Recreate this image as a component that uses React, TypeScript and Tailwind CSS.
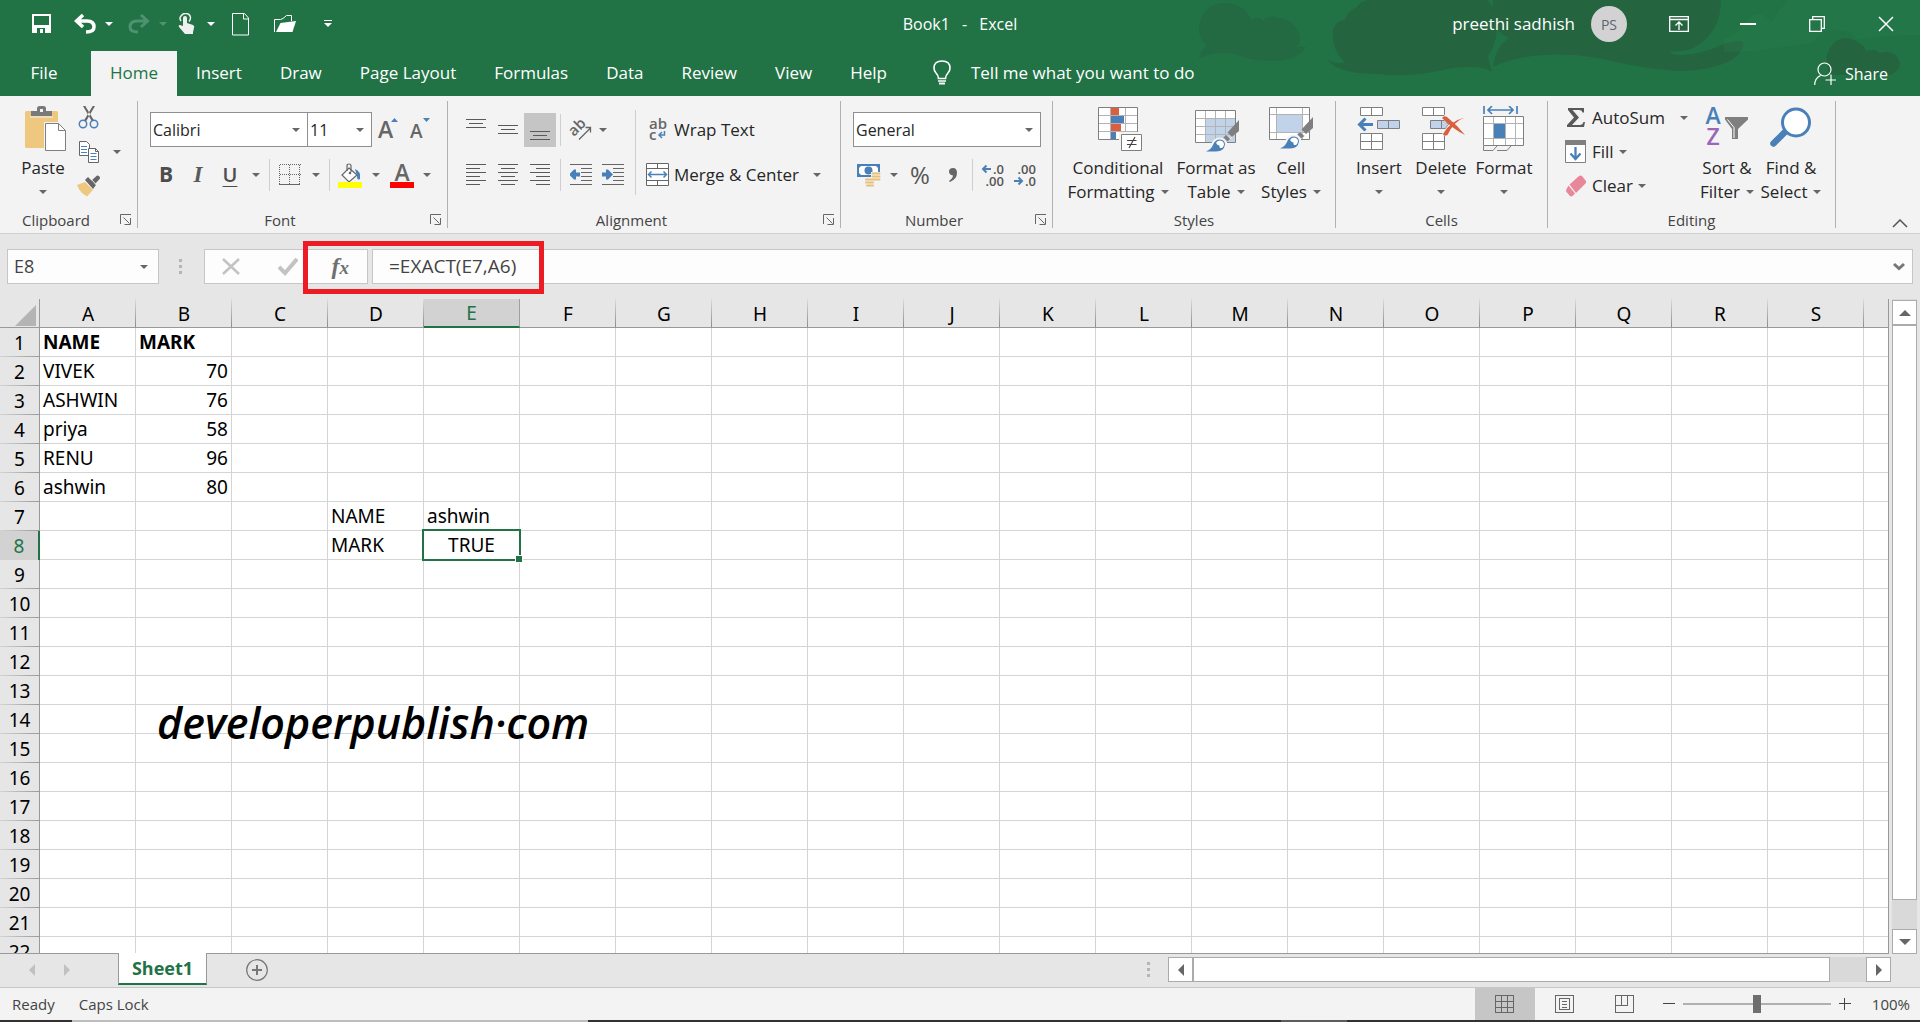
import type { ReactNode } from "react";
import clsx from "clsx";

const columns = "ABCDEFGHIJKLMNOPQRS".split("");
const rowCount = 22;
const activeCell = { col: "E", row: 8 };

type Cell = { text: string; bold?: boolean; align?: "right" | "center" };

const cells: Record<string, Cell> = {
  A1: { text: "NAME", bold: true },
  B1: { text: "MARK", bold: true },
  A2: { text: "VIVEK" },
  B2: { text: "70", align: "right" },
  A3: { text: "ASHWIN" },
  B3: { text: "76", align: "right" },
  A4: { text: "priya" },
  B4: { text: "58", align: "right" },
  A5: { text: "RENU" },
  B5: { text: "96", align: "right" },
  A6: { text: "ashwin" },
  B6: { text: "80", align: "right" },
  D7: { text: "NAME" },
  E7: { text: "ashwin" },
  D8: { text: "MARK" },
  E8: { text: "TRUE", align: "center" },
};

const tabs = ["Home", "Insert", "Draw", "Page Layout", "Formulas", "Data", "Review", "View", "Help"];

/* ---------- small shared pieces ---------- */

function Caret({ className = "text-[#666666]" }: { className?: string }) {
  return (
    <svg width="8" height="4" viewBox="0 0 8 4" className={clsx("shrink-0", className)} aria-hidden="true">
      <path d="M0 0h8L4 4z" fill="currentColor" />
    </svg>
  );
}

function IconButton({ label, className, children }: { label: string; className?: string; children: ReactNode }) {
  return (
    <button type="button" aria-label={label} className={clsx("flex h-[34px] shrink-0 items-center justify-center", className)}>
      {children}
    </button>
  );
}

function Divider({ className }: { className?: string }) {
  return <div className={clsx("h-8 w-px shrink-0 bg-[#cfcfcf]", className)} />;
}

function Group({ label, width, launcher, children }: { label: string; width: string; launcher?: boolean; children: ReactNode }) {
  return (
    <section aria-label={label} className={clsx("my-[5px] flex shrink-0 flex-col border-r border-[#b1b1b1]", width)}>
      <div className="h-[111px]">{children}</div>
      <div className="flex h-4 items-center text-[15px] leading-4 text-[#444444]">
        <span className="flex-1 text-center">{label}</span>
        {launcher && (
          <button type="button" aria-label={`${label} settings`} className="flex w-[25px] pl-2">
            <svg width="12" height="12" viewBox="0 0 12 12" fill="none" stroke="#666" aria-hidden="true">
              <path d="M.5 10V.5H11M3.5 3.5l6 6M10.500 4v6.500H4.500" />
            </svg>
          </button>
        )}
      </div>
    </section>
  );
}

function BigButton({ lines, width, icon, caret = "inline" }: { lines: string[]; width: string; icon: ReactNode; caret?: "inline" | "below" }) {
  return (
    <button type="button" className={clsx("flex shrink-0 flex-col items-center text-[17px] leading-6 text-[#262626]", width)}>
      <span className="flex h-[50px] items-start justify-center">{icon}</span>
      <span className="whitespace-nowrap">{lines[0]}</span>
      <span className="flex h-6 items-center gap-[6px] whitespace-nowrap">
        {caret === "inline" && lines[1]}
        <Caret />
      </span>
    </button>
  );
}

function Combo({ label, value, width }: { label: string; value: string; width: string }) {
  return (
    <div className={clsx("relative h-[35px] shrink-0", width)}>
      <select aria-label={label} className="h-full w-full appearance-none border border-[#8f8f8f] bg-white pl-[2px] text-[16px] text-[#262626]">
        <option>{value}</option>
      </select>
      <span className="pointer-events-none absolute inset-y-0 right-2 flex items-center">
        <Caret />
      </span>
    </div>
  );
}

/* ---------- icons ---------- */

const lineSets = {
  top: [[0, 20, 0], [3, 17, 4], [0, 20, 8]],
  middle: [[0, 20, 6], [3, 17, 10], [0, 20, 14]],
  bottom: [[0, 20, 12], [3, 17, 16], [0, 20, 20]],
  left: [[0, 20, 0], [0, 14, 4], [0, 20, 8], [0, 14, 12], [0, 20, 16], [0, 14, 20]],
  center: [[0, 20, 0], [3, 17, 4], [0, 20, 8], [3, 17, 12], [0, 20, 16], [3, 17, 20]],
  right: [[0, 20, 0], [6, 20, 4], [0, 20, 8], [6, 20, 12], [0, 20, 16], [6, 20, 20]],
};

function Lines({ kind }: { kind: keyof typeof lineSets }) {
  return (
    <svg width="20" height="22" viewBox="0 0 20 22" shapeRendering="crispEdges" stroke="#595959" aria-hidden="true">
      {lineSets[kind].map(([a, b, y]) => <path key={y} d={`M${a} ${y + 0.5}H${b}`} />)}
    </svg>
  );
}

function IndentIcon({ flip }: { flip?: boolean }) {
  return (
    <svg width="22" height="22" viewBox="0 0 22 22" aria-hidden="true">
      <path d="M0 .5h22M11 4.500h11M11 8.500h11M11 12.500h11M11 16.500h11M0 20.500h22" stroke="#666" />
      <path d={flip ? "M0 9h4V6h2l5 5-5 5H4v-3H0z" : "M10 9H6V6H4l-5 5 5 5h2v-3h4z"} fill="#4a80b8" transform="translate(0 -.5)" />
    </svg>
  );
}

const PasteIcon = () => (
  <svg width="48" height="46" viewBox="-6 0 48 46" aria-hidden="true">
    <rect x="0" y="5" width="33" height="37" rx="1.500" fill="#edc87e" />
    <path d="M6 10V5h6V2.500Q12 0 14.500 0h4Q21 0 21 2.500V5h6v5z" fill="#7a7a7a" />
    <rect x="15" y="3" width="3" height="3" fill="#f3f3f3" />
    <path d="M5 11h23" stroke="#f3f3f3" />
    <path d="M19 16h15.500l8 8V46H19z" fill="#f3f3f3" />
    <path d="M20.500 17.500h13l7 7v20h-20z" fill="#fff" stroke="#7f7f7f" />
    <path d="M33.500 17.500v7h7" fill="none" stroke="#7f7f7f" />
  </svg>
);

const CutIcon = () => (
  <svg width="22" height="24" viewBox="0 0 22 24" fill="none" aria-hidden="true">
    <path d="M5 0l2-.500 9 15-2 1zM17 0l-2-.500-9 15 2 1z" fill="#666" />
    <circle cx="5" cy="18" r="3.700" stroke="#4a80b8" strokeWidth="1.500" />
    <circle cx="16" cy="18" r="3.700" stroke="#4a80b8" strokeWidth="1.500" />
  </svg>
);

const CopyIcon = () => (
  <svg width="22" height="24" viewBox="0 0 22 24" fill="#fff" aria-hidden="true">
    <path d="M1.500 1.500h7l3 3v11h-10z" stroke="#666" />
    <path d="M3 6.500h6M3 9.500h6M3 12.500h6" stroke="#4a80b8" />
    <path d="M10.500 8.500h7l3 3v11h-10z" stroke="#666" />
    <path d="M17.500 8.500v3h3" stroke="#666" fill="none" />
    <path d="M12.500 13.500h6M12.500 16.500h6M12.500 19.500h6" stroke="#4a80b8" />
  </svg>
);

const PainterIcon = () => (
  <svg width="24" height="22" viewBox="0 0 24 22" aria-hidden="true">
    <path d="M0 10l8-3 8 8-6 6.500Q3 18 0 10z" fill="#edc87e" />
    <path d="M8 5l3-3 8 8-3 4z" fill="#666" />
    <path d="M14 6l6-5.500q3 0 3 3L18 9z" fill="#666" />
    <path d="M12.500 2.500l7.500 8" stroke="#f3f3f3" />
  </svg>
);

const SizeIcon = ({ up }: { up?: boolean }) => (
  <svg width="22" height="24" viewBox="0 0 22 24" className="overflow-visible" aria-hidden="true">
    <text x="1" y={21} fontFamily="Open Sans" fontWeight="600" fontSize={up ? 23 : 19} fill="#666">A</text>
    <path d={up ? "M14 5l3.500-4L21 5z" : "M14 1h7l-3.500 4z"} fill="#4a80b8" />
  </svg>
);

const BordersIcon = () => (
  <svg width="22" height="22" viewBox="0 0 22 22" shapeRendering="crispEdges" stroke="#666" fill="none" aria-hidden="true">
    <path d="M.5.5h21M.5 10.500h21M.5 1v20M10.500 1v20M20.500 1v20" strokeDasharray="1 1" />
    <path d="M0 20.500h21" />
  </svg>
);

const FillColorIcon = () => (
  <svg width="24" height="25" viewBox="0 0 24 25" aria-hidden="true">
    <path d="M11 5l8 7-8 7-7-7z" fill="#fff" stroke="#666" strokeWidth="1.200" />
    <path d="M9 8V3q0-2 2-2t2 2v6" fill="none" stroke="#666" strokeWidth="1.200" />
    <circle cx="12" cy="10" r="1.300" fill="#666" />
    <path d="M17 6q6 2 5 10-3 2-3-3z" fill="#4a80b8" />
    <path d="M0 19h24v6H0z" fill="#ffff00" />
  </svg>
);

const FontColorIcon = () => (
  <svg width="24" height="25" viewBox="0 0 24 25" className="overflow-visible" aria-hidden="true">
    <text x="12" y="18" textAnchor="middle" fontFamily="Open Sans" fontWeight="600" fontSize="23" fill="#666">A</text>
    <path d="M0 19h24v6H0z" fill="#ff0000" />
  </svg>
);

const OrientationIcon = () => (
  <svg width="24" height="24" viewBox="0 0 24 24" className="overflow-visible" aria-hidden="true">
    <text x="0" y="0" transform="translate(5 19) rotate(-45)" fontFamily="Open Sans" fontWeight="600" fontSize="15" fill="#666">ab</text>
    <path d="M10 21.500L21 10.500M16.500 9.500H21.500V14.500" fill="none" stroke="#666" strokeWidth="1.300" />
  </svg>
);

const WrapIcon = () => (
  <svg width="24" height="24" viewBox="0 0 24 24" className="overflow-visible" fontFamily="Open Sans" fontSize="15" fontWeight="600" fill="#666" aria-hidden="true">
    <text x="3" y="11">ab</text>
    <text x="3" y="22">c</text>
    <path d="M18.500 13v4H14M16 14l-3 3 3 3" fill="none" stroke="#4a80b8" strokeWidth="1.500" />
  </svg>
);

const MergeIcon = () => (
  <svg width="24" height="24" viewBox="0 0 24 24" fill="#fff" stroke="#666" aria-hidden="true">
    <path d="M.5.5h22v22H.5zM.5 5.500h22M.5 17.500h22M11.500.5v5M11.500 17.500v5" />
    <path d="M3 11.500h17M5.500 8.500l-3 3 3 3M17.500 8.500l3 3-3 3" fill="none" stroke="#4a80b8" strokeWidth="1.500" />
  </svg>
);

const CurrencyIcon = () => (
  <svg width="24" height="24" viewBox="0 0 24 24" aria-hidden="true">
    <path d="M0 1h23v13H0z" fill="#4a80b8" />
    <path d="M4 3h15l2 2v5l-2 2H4l-2-2V5z" fill="#fff" />
    <circle cx="11.500" cy="7.500" r="4" fill="#4a80b8" />
    <path d="M14 9h9v10h-6v4H8v-8h6z" fill="#f3f3f3" />
    <path d="M15.500 10.500h7M15.500 13.500h7M16.500 16.500h6M9 16.500h7M9 19.500h7M10 22.500h6" stroke="#e9bf78" strokeWidth="2" strokeLinecap="round" />
  </svg>
);

const DecimalIcon = ({ less }: { less?: boolean }) => (
  <svg width="24" height="26" viewBox="0 0 24 26" className="overflow-visible" fontFamily="Open Sans" fontSize="13" fontWeight="600" fill="#555" textAnchor="end" aria-hidden="true">
    <text x="23" y="12">{less ? ".00" : ".0"}</text>
    <text x="23" y="24">{less ? ".0" : ".00"}</text>
    {less ? (
      <path d="M1 19h8M5.500 15.500L9 19l-3.500 3.500" fill="none" stroke="#4a80b8" strokeWidth="2" />
    ) : (
      <path d="M10 7H2M5.500 3.500L2 7l3.500 3.500" fill="none" stroke="#4a80b8" strokeWidth="2" />
    )}
  </svg>
);

const ConditionalIcon = () => (
  <svg width="48" height="46" viewBox="-4 0 48 46" aria-hidden="true">
    <path d="M.5 1.500h39v32H.5z" fill="#fff" />
    <path d="M.5 9.500h39M.5 17.500h39M.5 25.500h39M12.500 1v32M27.500 1v32" stroke="#b3b3b3" />
    <path d="M.5 1.500h39v32H.5z" fill="none" stroke="#7f7f7f" />
    <path d="M13 2h8v7h-8zM13 18h10v7H13z" fill="#d95f3f" />
    <path d="M13 10h13v7H13zM13 26h5v7h-5z" fill="#4a80b8" />
    <path d="M21 26h23v19H21z" fill="#f3f3f3" />
    <path d="M23.500 28.500h20v16h-20z" fill="#fff" stroke="#7f7f7f" />
    <path d="M29 34.500h9.500M29 38.500h9.500M37 31l-6 11" stroke="#444" strokeWidth="1.200" />
  </svg>
);

// paint brush with its tip at the lower left, shared by the two style icons
const Brush = () => (
  <g>
    <path d="M44 9v12L31 34" fill="none" stroke="#f3f3f3" />
    <path d="M44 11v11l-7 6-4.500-4.500z" fill="#7f7f7f" />
    <path d="M31 25.500l4.500 4.500-3 3-4.500-4.500z" fill="#7f7f7f" stroke="#f3f3f3" strokeWidth=".5" />
    <path d="M10 43q5-2 7-7Q19 29.500 25 29.500q6 .5 5.500 6Q30 43 21 43z" fill="#f3f3f3" stroke="#f3f3f3" strokeWidth="2" />
    <path d="M11 42.500q5-2 7-6.500Q20 30.500 25 30.500q5 .5 5 5Q29 42.500 21 42.500z" fill="#4a80b8" />
    <path d="M21 34q1-2.500 4-2.500 4 .5 4 4-.500 2.500-2 3.500-3 .500-2.500-2.500-2 0-3.500-2.500z" fill="#fff" />
  </g>
);

const FormatTableIcon = () => (
  <svg width="46" height="48" viewBox="-2 0 46 48" aria-hidden="true">
    <path d="M.5 4.500h40v32H.5z" fill="#fff" />
    <path d="M11 13h29v23H11z" fill="#c0d3e9" />
    <path d="M.5 12.500h40M.5 20.500h40M.5 28.500h40M10.500 5v31M20.500 5v31M30.500 5v31" stroke="#b3b3b3" />
    <path d="M.5 4.500h40v32H.5z" fill="none" stroke="#7f7f7f" />
    <g transform="translate(0 3)"><Brush /></g>
  </svg>
);

const CellStylesIcon = () => (
  <svg width="44" height="46" viewBox="0 0 44 46" aria-hidden="true">
    <path d="M.5 1.500h40v32H.5z" fill="#fff" />
    <path d="M8 9h25v18H8z" fill="#c0d3e9" />
    <path d="M.5 8.500h40M.5 26.500h40M7.500 1v32M33.500 1v32" stroke="#b3b3b3" />
    <path d="M.5 1.500h40v32H.5z" fill="none" stroke="#7f7f7f" />
    <Brush />
  </svg>
);

const InsertIcon = () => (
  <svg width="44" height="46" viewBox="0 0 44 46" fill="#fff" stroke="#7f7f7f" aria-hidden="true">
    <path d="M3.500 1.500h22v8h-22zM14.500 1.500v8M3.500 27.500h22v16h-22zM14.500 27.500v16M3.500 35.500h22" />
    <path d="M20.500 14.500h22v8h-22zM31.500 14.500v8" fill="#c0d3e9" />
    <path d="M16 18.500H2M8.500 12.500l-6 6 6 6" fill="none" stroke="#4a80b8" strokeWidth="3" />
  </svg>
);

const DeleteIcon = () => (
  <svg width="49" height="46" viewBox="-5 0 49 46" fill="#fff" stroke="#7f7f7f" aria-hidden="true">
    <path d="M.5 1.500h22v8H.5zM11.500 1.500v8M.5 27.500h22v16H.5zM11.500 27.500v16M.5 35.500h22" />
    <path d="M8.500 14.500h15l3 4-3 4h-15zM19.500 14.500v8" fill="#c0d3e9" />
    <path d="M22 10q9 5 20 19M43 12Q31 16 23 30" fill="none" stroke="#f3f3f3" strokeWidth="7" />
    <path d="M20 12q2-3 5-1 10 8 18 18Q31 23 20 12z" fill="#d95f3f" stroke="none" />
    <path d="M43 11.500Q32 15 25.500 29q-4 2-4.500-1Q28 15 43 11.500z" fill="#d95f3f" stroke="none" />
  </svg>
);

const FormatIcon = () => (
  <svg width="42" height="46" viewBox="0 0 42 46" aria-hidden="true">
    <path d="M1 0v8M34 0v8M6 4h23M9 0L5 4l4 4M26 0l4 4-4 4" fill="none" stroke="#4a80b8" strokeWidth="1.700" />
    <path d="M.5 10.500h40v29H.5z" fill="#fff" />
    <path d="M.5 17.500h40M.5 32.500h40M10.500 10v29M22.500 10v29M32.500 10v29" stroke="#b3b3b3" />
    <path d="M.5 10.500h40v29H.5z" fill="none" stroke="#7f7f7f" />
    <path d="M11 18h11v14H11z" fill="#4a80b8" />
    <path d="M.5 40v4.500H10l4-4.500M14 44.500h10l4-4.500" fill="none" stroke="#7f7f7f" />
  </svg>
);

const SigmaIcon = () => (
  <svg width="22" height="24" viewBox="0 0 22 24" aria-hidden="true">
    <path d="M3 2h16v4.500h-1.500Q17 4 14.500 4H7.500l6.500 7.500L7 19h8q2.500 0 3.500-3H20l-1 5H2v-2l7-7.500L3 4z" fill="#595959" />
  </svg>
);

const FillIcon = () => (
  <svg width="22" height="24" viewBox="0 0 22 24" aria-hidden="true">
    <path d="M.5.5h20v22H.5z" fill="#fff" stroke="#7f7f7f" />
    <path d="M0 0h21v5H0z" fill="#7f7f7f" />
    <path d="M10.500 7v12M5.500 13.500l5 5.500 5-5.500" fill="none" stroke="#4a80b8" strokeWidth="2.300" />
  </svg>
);

const EraserIcon = () => (
  <svg width="22" height="22" viewBox="0 0 22 22" fill="#e8879a" aria-hidden="true">
    <path d="M14 1q1.500-1 3 0l4 5q.5 1.500-.5 2.500L11 18 4.500 9.500z" />
    <path d="M3.500 10.500l6.500 8-2.500 2.500q-1.500 1-3-.5L1.500 17q-1-1.500 0-3z" />
  </svg>
);

const SortIcon = () => (
  <svg width="44" height="46" viewBox="0 0 44 46" className="overflow-visible" aria-hidden="true">
    <text x="8" y="18" textAnchor="middle" fontFamily="Open Sans" fontWeight="600" fontSize="23" fill="#4a80b8">A</text>
    <text x="8" y="39" textAnchor="middle" fontFamily="Open Sans" fontWeight="600" fontSize="23" fill="#9a66b8">Z</text>
    <path d="M20 11h23v2.500L33 23v10h-6V23L20 13.500z" fill="#7f7f7f" />
    <path d="M22.500 13.500l6.500 8V32" fill="none" stroke="#fff" />
  </svg>
);

const FindIcon = () => (
  <svg width="42" height="46" viewBox="0 0 42 46" aria-hidden="true">
    <path d="M16 25L3.500 37.500" stroke="#4a80b8" strokeWidth="6.500" strokeLinecap="round" />
    <circle cx="26" cy="16.500" r="13.500" fill="#fff" stroke="#4a80b8" strokeWidth="3" />
  </svg>
);

/* ---------- title bar and tabs ---------- */

function HeaderArt() {
  return (
    <svg width="740" height="96" viewBox="0 0 740 96" fill="#24653f" className="pointer-events-none absolute top-0 right-0" aria-hidden="true">
      <path d="M19 58Q20 50 27 46 16 37 20 22 26 3 44 3q20 0 27 17 8-5 12 1 6-7 17-3 18 4 20 20 0 6-4 9 6-1 10 0-8 14-36 14-20 0-35-7Q38 51 19 58z" fill="#236a43" />
      <path d="M147 59q8 6 18 3Q151 50 153 30q3-10 12-10 3-10 12-13Q180 2 187 0h120q12 10 10 30-2 18-9 26l4 16q-12-8-44-3-40 9-70 5Q157 74 147 59z" />
      <path d="M313 67q2-20 16-29-16-8-16-20V0h228q0 30-23 45-6 5-16 6-16 1-14 0 6 6 24 3 18-3 31-10 18-5 20-2 2 8-10 17-20 12-55 12-35-2-80-13Q355 48 313 67z" />
      <path d="M650 75q-8-20 3-31 10-10 23-3 8 4 10 10 8-3 14 2 16-4 20 10 0 8-10 12z" />
      <path d="M608 0q-12 14-16 22-14-16-26 0-8 14-22 16v14q40 0 90-10 4-10 16-12 22-2 26 10 30-5 64-5V0z" fill="#2b7f50" opacity=".25" />
    </svg>
  );
}

function TitleBar() {
  return (
    <div className="relative flex h-[51px] items-center pb-[3px] text-white">
      <div className="flex flex-1 items-center">
        <button type="button" aria-label="Save" className="mr-[11px] ml-[26px] flex w-8 justify-center">
          <svg width="20" height="20" viewBox="0 0 20 20" aria-hidden="true">
            <path d="M1 1h17v17H1z" fill="none" stroke="#fff" strokeWidth="2" />
            <path d="M1 11h17v8H1z" fill="#fff" />
            <path d="M5 14h8v5H5z" fill="#217346" /><path d="M8 15h3v4H8z" fill="#fff" />
          </svg>
        </button>
        <button type="button" aria-label="Undo" className="flex w-8 justify-center">
          <svg width="22" height="20" viewBox="0 0 22 20" fill="none" stroke="#fff" strokeWidth="3.500" aria-hidden="true">
            <path d="M2 7h11q7 0 7 6 0 5-8 5M9 1L2.500 7 9 13" />
          </svg>
        </button>
        <button type="button" aria-label="Undo list" className="flex w-4 justify-center"><Caret className="text-white" /></button>
        <button type="button" aria-label="Redo" className="ml-[6px] flex w-8 justify-center">
          <svg width="22" height="20" viewBox="0 0 22 20" fill="none" stroke="#4f9270" strokeWidth="3" aria-hidden="true">
            <path d="M20 7H9q-7 0-7 6 0 5 8 5M13 1l6.500 6L13 13" />
          </svg>
        </button>
        <button type="button" aria-label="Redo list" className="flex w-4 justify-center"><Caret className="text-[#4f9270]" /></button>
        <button type="button" aria-label="Touch mode" className="flex w-8 justify-center">
          <svg width="18" height="22" viewBox="0 0 18 22" fill="#f0f0f0" aria-hidden="true">
            <path d="M5 9V5q0-2 2-2t2 2v5l6 2q2 1 1 3l-1 4v2H7L1 14q-1-2 1-2l3 1z" />
            <path d="M3 8Q1 5 3 3q2-3 5-2.500 4 .5 4.500 4Q12.500 7 11 8.500" fill="none" stroke="#f0f0f0" strokeWidth="1.500" />
          </svg>
        </button>
        <button type="button" aria-label="Touch mode list" className="flex w-4 justify-center"><Caret className="text-white" /></button>
        <button type="button" aria-label="New" className="ml-[6px] flex w-8 justify-center">
          <svg width="18" height="23" viewBox="0 0 18 23" fill="none" stroke="#fff" aria-hidden="true">
            <path d="M.5.5h12l4 4.500v17H.5zM11.500.5V6H17" />
          </svg>
        </button>
        <button type="button" aria-label="Open" className="ml-3 flex w-8 justify-center">
          <svg width="22" height="18" viewBox="0 0 22 18" aria-hidden="true">
            <path d="M.5 17V4.500h6L9 3.500 12.500.5h5V6" fill="none" stroke="#fff" />
            <path d="M2 17L6.500 8 22 6l-3.500 11z" fill="#fff" />
          </svg>
        </button>
        <button type="button" aria-label="Customize toolbar" className="ml-[11px] flex w-8 justify-center">
          <svg width="8" height="8" viewBox="0 0 8 8" fill="#fff" aria-hidden="true"><path d="M0 0h8v1H0zM0 3h8L4 7z" /></svg>
        </button>
      </div>
      <h1 className="text-[16px]">Book1 <span className="mx-2">-</span> Excel</h1>
      <div className="flex flex-1 items-center justify-end">
        <span className="text-[17px]">preethi sadhish</span>
        <span className="mr-[17px] ml-4 flex size-9 items-center justify-center rounded-full bg-[#d2d2d2] text-[14px] text-[#5c6570]">PS</span>
        <button type="button" aria-label="Ribbon display options" className="flex w-[69px] justify-center">
          <svg width="20" height="16" viewBox="0 0 20 16" fill="none" stroke="#fff" strokeWidth="1.300" aria-hidden="true">
            <path d="M.7.700h18.600v14.600H.7zM.7 3.500h18.600M10 14V6M6.500 9.500L10 6l3.500 3.500" />
          </svg>
        </button>
        <button type="button" aria-label="Minimize" className="flex w-[69px] justify-center">
          <svg width="16" height="16" viewBox="0 0 16 16" aria-hidden="true"><path d="M0 7h16v2H0z" fill="#fff" /></svg>
        </button>
        <button type="button" aria-label="Restore" className="flex w-[69px] justify-center">
          <svg width="16" height="16" viewBox="0 0 16 16" fill="none" stroke="#fff" strokeWidth="1.300" aria-hidden="true">
            <path d="M.7 3.700h11.600v11.600H.7zM3.700 3V.7h11.600v11.600H13" />
          </svg>
        </button>
        <button type="button" aria-label="Close" className="flex w-[69px] justify-center">
          <svg width="16" height="16" viewBox="0 0 16 16" stroke="#fff" strokeWidth="1.500" aria-hidden="true"><path d="M1 1l14 14M15 1L1 15" /></svg>
        </button>
      </div>
    </div>
  );
}

function TabRow() {
  return (
    <nav className="relative flex h-[45px] items-center text-[17px] text-white" aria-label="Ribbon tabs">
      <button type="button" className="h-full w-[91px] pr-[3px] pb-[2px]">File</button>
      {tabs.map(tab => (
        <button key={tab} type="button" className={clsx("h-full px-[19px] pb-[2px] whitespace-nowrap", tab === "Home" && "bg-[#f3f3f3] text-[#217346]")}>
          {tab}
        </button>
      ))}
      <button type="button" className="ml-[27px] flex items-center gap-5 pb-[2px]">
        <svg width="18" height="25" viewBox="0 0 18 25" fill="none" stroke="#fff" strokeWidth="1.600" aria-hidden="true">
          <path d="M5.500 18.500q0-3-2.500-5.500-2-2-2-5 0-7 8-7t8 7q0 3-2 5-2.500 2.500-2.500 5.500zM5 21h8" />
          <path d="M6 23.500h6" strokeWidth="2" />
        </svg>
        Tell me what you want to do
      </button>
      <button type="button" className="ml-auto flex items-center gap-2 pr-8 text-[16px]">
        <svg width="23" height="24" viewBox="0 0 23 24" fill="none" stroke="#fff" strokeWidth="1.200" aria-hidden="true">
          <circle cx="10.500" cy="7.500" r="6.500" /><path d="M.7 23q0-7 6-9.500M17 12.500V23M11.500 18H22" />
        </svg>
        Share
      </button>
    </nav>
  );
}

/* ---------- ribbon ---------- */

function Ribbon() {
  return (
    <div className="flex h-[138px] border-b border-[#d0d0d0] bg-[#f3f3f3]">
      <Group label="Clipboard" width="w-[138px]" launcher>
        <div className="flex pl-[18px]">
          <div className="pt-[5px]">
            <BigButton lines={["Paste"]} caret="below" width="w-[50px]" icon={<PasteIcon />} />
          </div>
          <div className="flex flex-col pl-[9px]">
            <IconButton label="Cut" className="w-6"><CutIcon /></IconButton>
            <div className="flex">
              <IconButton label="Copy" className="w-6"><CopyIcon /></IconButton>
              <IconButton label="Copy options" className="w-6 pl-2"><Caret /></IconButton>
            </div>
            <IconButton label="Format Painter" className="w-6"><PainterIcon /></IconButton>
          </div>
        </div>
      </Group>

      <Group label="Font" width="w-[310px]" launcher>
        <div className="flex pt-[11px] pl-3">
          <Combo label="Font name" value="Calibri" width="w-[158px]" />
          <Combo label="Font size" value="11" width="-ml-px w-[65px]" />
          <IconButton label="Increase font size" className="w-8"><SizeIcon up /></IconButton>
          <IconButton label="Decrease font size" className="w-8"><SizeIcon /></IconButton>
        </div>
        <div className="flex items-center pt-[11px] pl-3">
          <IconButton label="Bold" className="w-8 text-[21px] font-bold text-[#4d4d4d]">B</IconButton>
          <IconButton label="Italic" className="w-8 font-['Liberation_Serif',serif] text-[23px] font-bold text-[#5a5a5a] italic">I</IconButton>
          <IconButton label="Underline" className="w-8 text-[20px] font-semibold text-[#4d4d4d] underline decoration-1 underline-offset-4">U</IconButton>
          <IconButton label="Underline options" className="w-5"><Caret /></IconButton>
          <Divider className="mr-1 ml-[3px]" />
          <IconButton label="Borders" className="w-8"><BordersIcon /></IconButton>
          <IconButton label="Border options" className="w-5"><Caret /></IconButton>
          <Divider className="mx-[3px]" />
          <IconButton label="Fill color" className="w-[34px]"><FillColorIcon /></IconButton>
          <IconButton label="Fill color options" className="w-[18px]"><Caret /></IconButton>
          <IconButton label="Font color" className="w-[34px]"><FontColorIcon /></IconButton>
          <IconButton label="Font color options" className="w-4"><Caret /></IconButton>
        </div>
      </Group>

      <Group label="Alignment" width="w-[393px]" launcher>
        <div className="flex">
          <div className="pl-3">
            <div className="flex items-center pt-3">
              <IconButton label="Top align" className="w-8"><Lines kind="top" /></IconButton>
              <IconButton label="Middle align" className="w-8"><Lines kind="middle" /></IconButton>
              <IconButton label="Bottom align" className="w-8 bg-[#c5c5c5]"><Lines kind="bottom" /></IconButton>
              <Divider className="mx-1" />
              <IconButton label="Orientation" className="w-8"><OrientationIcon /></IconButton>
              <IconButton label="Orientation options" className="w-3"><Caret /></IconButton>
            </div>
            <div className="flex items-center pt-[11px]">
              <IconButton label="Align left" className="w-8"><Lines kind="left" /></IconButton>
              <IconButton label="Center" className="w-8"><Lines kind="center" /></IconButton>
              <IconButton label="Align right" className="w-8"><Lines kind="right" /></IconButton>
              <Divider className="mx-1" />
              <IconButton label="Decrease indent" className="w-8"><IndentIcon /></IconButton>
              <IconButton label="Increase indent" className="w-8"><IndentIcon flip /></IconButton>
            </div>
          </div>
          <div className="mt-[9px] ml-[6px] h-[85px] w-px bg-[#cfcfcf]" />
          <div className="pl-[10px] text-[17px] text-[#262626]">
            <button type="button" className="mt-3 flex h-[34px] items-center gap-1"><WrapIcon />Wrap Text</button>
            <button type="button" className="mt-[11px] flex h-[34px] items-center gap-1 whitespace-nowrap">
              <MergeIcon />Merge &amp; Center<span className="flex pl-[10px]"><Caret /></span>
            </button>
          </div>
        </div>
      </Group>

      <Group label="Number" width="w-[212px]" launcher>
        <div className="flex pt-[11px] pl-3">
          <Combo label="Number format" value="General" width="w-[188px]" />
        </div>
        <div className="flex items-center pt-[11px] pl-3">
          <IconButton label="Accounting format" className="w-8"><CurrencyIcon /></IconButton>
          <IconButton label="Accounting options" className="w-[18px]"><Caret /></IconButton>
          <IconButton label="Percent style" className="w-[34px] text-[24px] text-[#555555]">%</IconButton>
          <IconButton label="Comma style" className="w-8">
            <svg width="10" height="16" viewBox="0 0 10 16" fill="#666" aria-hidden="true">
              <path d="M5 1q4 0 4 5 0 6-7 9l-1-1q4-3 4-5.500Q1 8 1 4.500 1 1 5 1z" />
            </svg>
          </IconButton>
          <Divider className="mr-1 ml-[3px]" />
          <IconButton label="Increase decimal" className="w-8"><DecimalIcon /></IconButton>
          <IconButton label="Decrease decimal" className="w-8"><DecimalIcon less /></IconButton>
        </div>
      </Group>

      <Group label="Styles" width="w-[283px]">
        <div className="flex pt-[5px] pl-3">
          <BigButton lines={["Conditional", "Formatting"]} width="w-[106px]" icon={<ConditionalIcon />} />
          <BigButton lines={["Format as", "Table"]} width="w-[90px]" icon={<FormatTableIcon />} />
          <BigButton lines={["Cell", "Styles"]} width="w-[60px]" icon={<CellStylesIcon />} />
        </div>
      </Group>

      <Group label="Cells" width="w-[212px]">
        <div className="flex pt-[5px] pl-3">
          <BigButton lines={["Insert"]} caret="below" width="w-[62px]" icon={<InsertIcon />} />
          <BigButton lines={["Delete"]} caret="below" width="w-[62px]" icon={<DeleteIcon />} />
          <BigButton lines={["Format"]} caret="below" width="w-[64px]" icon={<FormatIcon />} />
        </div>
      </Group>

      <Group label="Editing" width="w-[288px]">
        <div className="flex">
          <div className="w-[147px] pl-[17px] text-[17px] text-[#262626]">
            <button type="button" className="flex h-[34px] items-center gap-[5px]"><SigmaIcon />AutoSum<span className="flex pl-[10px]"><Caret /></span></button>
            <button type="button" className="flex h-[34px] items-center gap-[5px]"><FillIcon />Fill<Caret /></button>
            <button type="button" className="flex h-[34px] items-center gap-[5px]"><EraserIcon />Clear<Caret /></button>
          </div>
          <div className="flex pt-[5px]">
            <BigButton lines={["Sort &", "Filter"]} width="w-[64px]" icon={<SortIcon />} />
            <BigButton lines={["Find &", "Select"]} width="w-[64px]" icon={<FindIcon />} />
          </div>
        </div>
      </Group>

      <button type="button" aria-label="Collapse ribbon" className="mt-auto mr-3 mb-[5px] ml-auto">
        <svg width="16" height="9" viewBox="0 0 16 9" fill="none" stroke="#555" strokeWidth="1.500" aria-hidden="true"><path d="M1 8l7-7 7 7" /></svg>
      </button>
    </div>
  );
}

/* ---------- formula bar ---------- */

function FormulaBar() {
  return (
    <div className="relative flex h-[65px] shrink-0 items-start pt-[15px] pr-[7px] pl-[7px] text-[17px] text-[#444444]">
      <div className="flex h-[35px] w-[152px] items-center border border-[#c6c6c6] bg-[#fdfdfd] pr-[10px]">
        <input aria-label="Name box" defaultValue="E8" className="w-0 flex-1 bg-transparent pl-[6px] text-[18px] outline-none" />
        <Caret />
      </div>
      <div className="mx-[20px] flex h-[35px] w-[3px] flex-col justify-center gap-[3px]">
        <i className="h-[3px] bg-[#b5b5b5]" /><i className="h-[3px] bg-[#b5b5b5]" /><i className="h-[3px] bg-[#b5b5b5]" />
      </div>
      <div className="ml-[2px] flex h-[35px] w-[164px] items-center justify-between border border-[#c6c6c6] bg-[#fdfdfd] pr-[18px] pl-[17px]">
        <button type="button" aria-label="Cancel">
          <svg width="18" height="17" viewBox="0 0 18 17" stroke="#c3c3c3" strokeWidth="2.500" aria-hidden="true"><path d="M1 1l16 15M17 1L1 16" /></svg>
        </button>
        <button type="button" aria-label="Enter" className="pl-4">
          <svg width="20" height="18" viewBox="0 0 20 18" fill="none" stroke="#c3c3c3" strokeWidth="4" aria-hidden="true"><path d="M1 9l6 6L19 1" /></svg>
        </button>
        <button type="button" aria-label="Insert function" className="pl-3 font-['Liberation_Serif',serif] text-[24px] leading-6 font-bold text-[#707070] italic">
          f<span className="text-[19px]">x</span>
        </button>
      </div>
      <div className="ml-1 flex h-[35px] flex-1 items-center border border-[#c6c6c6] bg-[#fdfdfd] pr-[7px]">
        <input aria-label="Formula" defaultValue="=EXACT(E7,A6)" className="w-0 flex-1 bg-transparent pl-4 text-[19px] outline-none" />
        <button type="button" aria-label="Expand formula bar">
          <svg width="12" height="9" viewBox="0 0 12 9" fill="none" stroke="#777" strokeWidth="3" aria-hidden="true"><path d="M1 2l5 4.500L11 2" /></svg>
        </button>
      </div>
      <div className="pointer-events-none absolute top-[7px] left-[303px] h-[53px] w-[241px] border-[5px] border-[#ed1c24]" />
    </div>
  );
}

/* ---------- sheet ---------- */

function Sheet() {
  return (
    <div className="relative min-h-0 flex-1 overflow-hidden border-r border-b border-[#999999]">
      <table className="w-[1960px] table-fixed border-separate border-spacing-0 font-['Noto_Sans','Open_Sans',sans-serif] text-[19px] leading-[28px] text-black">
        <colgroup>
          <col className="w-10" />
          {columns.map(c => <col key={c} className="w-24" />)}
          <col className="w-24" />
        </colgroup>
        <thead>
          <tr className="h-[29px]">
            <th className="border-r border-b border-[#9a9a9a] bg-[#e6e6e6] p-0" aria-label="Select all">
              <svg width="21" height="21" viewBox="0 0 21 21" className="mt-1 ml-[15px]" aria-hidden="true"><path d="M21 0v21H0z" fill="#b4b4b4" /></svg>
            </th>
            {columns.map(c => (
              <th
                key={c}
                scope="col"
                className={clsx(
                  "bg-[length:1px_100%] bg-right bg-no-repeat px-0 pt-[2px] pb-0 font-normal",
                  c === activeCell.col
                    ? "border-r border-b-2 border-r-[#a0a0a0] border-b-[#217346] bg-[#d2d2d2] text-[#217346] leading-[25px]"
                    : "border-b border-[#999999] bg-[#e6e6e6] bg-[linear-gradient(#dadada,#8c8c8c)] leading-[26px]"
                )}
              >
                {c}
              </th>
            ))}
            <th className="border-b border-[#999999] bg-[#e6e6e6] p-0" />
          </tr>
        </thead>
        <tbody>
          {Array.from({ length: rowCount }, (_, i) => i + 1).map(row => (
            <tr key={row} className="h-[29px]">
              <th
                scope="row"
                className={clsx(
                  "bg-[length:100%_1px] bg-bottom bg-no-repeat p-0 font-normal",
                  row === activeCell.row
                    ? "border-r-2 border-[#217346] bg-[#d2d2d2] text-[#217346]"
                    : "border-r border-[#999999] bg-[#e6e6e6] bg-[linear-gradient(90deg,#d4d4d4,#9a9a9a)]"
                )}
              >
                {row}
              </th>
              {columns.map(c => {
                const cell = cells[c + row];
                const active = c === activeCell.col && row === activeCell.row;
                return (
                  <td
                    key={c}
                    className={clsx(
                      "border-r border-b border-[#d4d4d4] bg-white px-[3px] py-0",
                      cell?.bold && "font-bold",
                      cell?.align === "right" && "text-right",
                      cell?.align === "center" && "text-center",
                      active && "relative"
                    )}
                  >
                    {cell?.text}
                    {active && (
                      <div className="absolute -top-[2px] -right-[2px] -bottom-[2px] -left-[2px] border-2 border-[#217346]">
                        <i className="absolute -right-[3px] -bottom-[3px] size-[6px] bg-[#217346] ring-1 ring-white" />
                      </div>
                    )}
                  </td>
                );
              })}
              <td className="border-b border-[#d4d4d4] bg-white" />
            </tr>
          ))}
        </tbody>
      </table>
      <p className="absolute top-[394px] left-[157px] font-['Open_Sans',sans-serif] text-[43px] leading-[60px] font-semibold text-black italic">
        developerpublish·com
      </p>
    </div>
  );
}

function Arrow({ dir, className = "text-[#666666]" }: { dir: "up" | "down" | "left" | "right"; className?: string }) {
  const d = { up: "M0 9l6-6 6 6z", down: "M0 3h12L6 9z", left: "M9 0v12L3 6z", right: "M3 0v12l6-6z" }[dir];
  return <svg width="12" height="12" viewBox="0 0 12 12" className={className} aria-hidden="true"><path d={d} fill="currentColor" /></svg>;
}

function VerticalScroll() {
  const button = "flex h-[25px] items-center justify-center border border-[#ababab] bg-white";
  return (
    <div className="mr-[3px] ml-[3px] flex w-[25px] flex-col bg-[#d9d9d9] pt-px">
      <button type="button" aria-label="Scroll up" className={button}><Arrow dir="up" /></button>
      <div className="flex-1 border border-[#ababab] bg-white" />
      <div className="h-[29px]" />
      <button type="button" aria-label="Scroll down" className={button}><Arrow dir="down" /></button>
    </div>
  );
}

function SheetTabs() {
  const button = "flex w-[25px] items-center justify-center border border-[#ababab] bg-white";
  return (
    <div className="flex h-[34px] shrink-0 items-start border-b border-[#c6c6c6]">
      <button type="button" aria-label="Previous sheet" className="ml-[26px] flex h-8 items-center"><Arrow dir="left" className="text-[#c0c0c0]" /></button>
      <button type="button" aria-label="Next sheet" className="ml-[23px] flex h-8 items-center"><Arrow dir="right" className="text-[#c0c0c0]" /></button>
      <button type="button" className="relative -mt-px ml-[45px] h-[32px] w-[89px] border-x border-b-2 border-x-[#999999] border-b-[#217346] bg-white text-[18px] leading-[28px] font-bold text-[#217346]">
        Sheet1
      </button>
      <button type="button" aria-label="New sheet" className="mt-[5px] ml-[39px]">
        <svg width="22" height="22" viewBox="0 0 22 22" fill="none" stroke="#777" aria-hidden="true">
          <circle cx="11" cy="11" r="10.300" strokeWidth="1.200" /><path d="M11 6v10M6 11h10" strokeWidth="2" />
        </svg>
      </button>
      <div className="mt-2 mr-[18px] ml-auto flex w-[3px] flex-col gap-[3px]">
        <i className="h-[3px] bg-[#b5b5b5]" /><i className="h-[3px] bg-[#b5b5b5]" /><i className="h-[3px] bg-[#b5b5b5]" />
      </div>
      <div className="mt-[3px] mr-[29px] flex h-[25px] w-[723px] bg-[#d9d9d9]">
        <button type="button" aria-label="Scroll left" className={button}><Arrow dir="left" /></button>
        <div className="flex-1 border border-[#ababab] bg-white" />
        <div className="w-9" />
        <button type="button" aria-label="Scroll right" className={button}><Arrow dir="right" /></button>
      </div>
    </div>
  );
}

function StatusBar() {
  return (
    <footer className="shrink-0">
      <div className="flex h-8 items-center bg-[#f3f3f3] pr-[10px] pl-3 text-[15px] text-[#444444]">
        <span>Ready</span>
        <span className="ml-6">Caps Lock</span>
        <button type="button" aria-label="Normal view" className="ml-auto flex h-8 w-[60px] items-center justify-center bg-[#c6c6c6]">
          <svg width="20" height="18" viewBox="0 0 20 18" fill="none" stroke="#666" shapeRendering="crispEdges" aria-hidden="true">
            <path d="M.5.5h18v17H.5zM.5 6.500h18M.5 12.500h18M6.500.5v17M12.500.5v17" />
          </svg>
        </button>
        <button type="button" aria-label="Page layout view" className="flex w-[60px] justify-center">
          <svg width="20" height="18" viewBox="0 0 20 18" fill="none" stroke="#666" shapeRendering="crispEdges" aria-hidden="true">
            <path d="M.5.5h18v17H.5zM4.500 3.500h10v11h-10zM7 6.500h5M7 9.500h5M7 12.500h5" />
          </svg>
        </button>
        <button type="button" aria-label="Page break view" className="flex w-[60px] justify-center">
          <svg width="20" height="18" viewBox="0 0 20 18" fill="none" stroke="#666" shapeRendering="crispEdges" aria-hidden="true">
            <path d="M.5.5h18v17H.5zM.5 10.500h12v-10M6.500.5v10" />
          </svg>
        </button>
        <button type="button" aria-label="Zoom out" className="ml-2 flex">
          <svg width="12" height="12" viewBox="0 0 12 12" stroke="#444" aria-hidden="true"><path d="M0 5.500h12" /></svg>
        </button>
        <input
          type="range"
          aria-label="Zoom"
          defaultValue={50}
          className="mx-2 h-[18px] w-[148px] appearance-none bg-[linear-gradient(#b0b0b0,#b0b0b0)] bg-[length:100%_2px] bg-center bg-no-repeat [&::-webkit-slider-thumb]:h-[18px] [&::-webkit-slider-thumb]:w-2 [&::-webkit-slider-thumb]:appearance-none [&::-webkit-slider-thumb]:bg-[#6e6e6e]"
        />
        <button type="button" aria-label="Zoom in" className="flex">
          <svg width="12" height="12" viewBox="0 0 12 12" stroke="#444" aria-hidden="true"><path d="M0 5.500h12M5.500 0v12" /></svg>
        </button>
        <span className="w-[59px] text-right">100%</span>
      </div>
      <div className="flex h-[2px] bg-[#33302f]">
        <div className="w-[72px]" />
        <div className="w-[516px] bg-[#bdbdbd]" />
        <div className="ml-auto w-[66px] bg-[#5c5c5c]" />
        <div className="w-[573px]" />
      </div>
    </footer>
  );
}

export default function App() {
  return (
    <div className="flex h-screen flex-col overflow-hidden bg-[#e6e6e6] font-['Open_Sans','Noto_Sans',sans-serif]">
      <header className="shrink-0">
        <div className="relative bg-[#217346]">
          <HeaderArt />
          <TitleBar />
          <TabRow />
        </div>
        <Ribbon />
      </header>
      <FormulaBar />
      <main className="flex min-h-0 flex-1">
        <Sheet />
        <VerticalScroll />
      </main>
      <SheetTabs />
      <StatusBar />
    </div>
  );
}
